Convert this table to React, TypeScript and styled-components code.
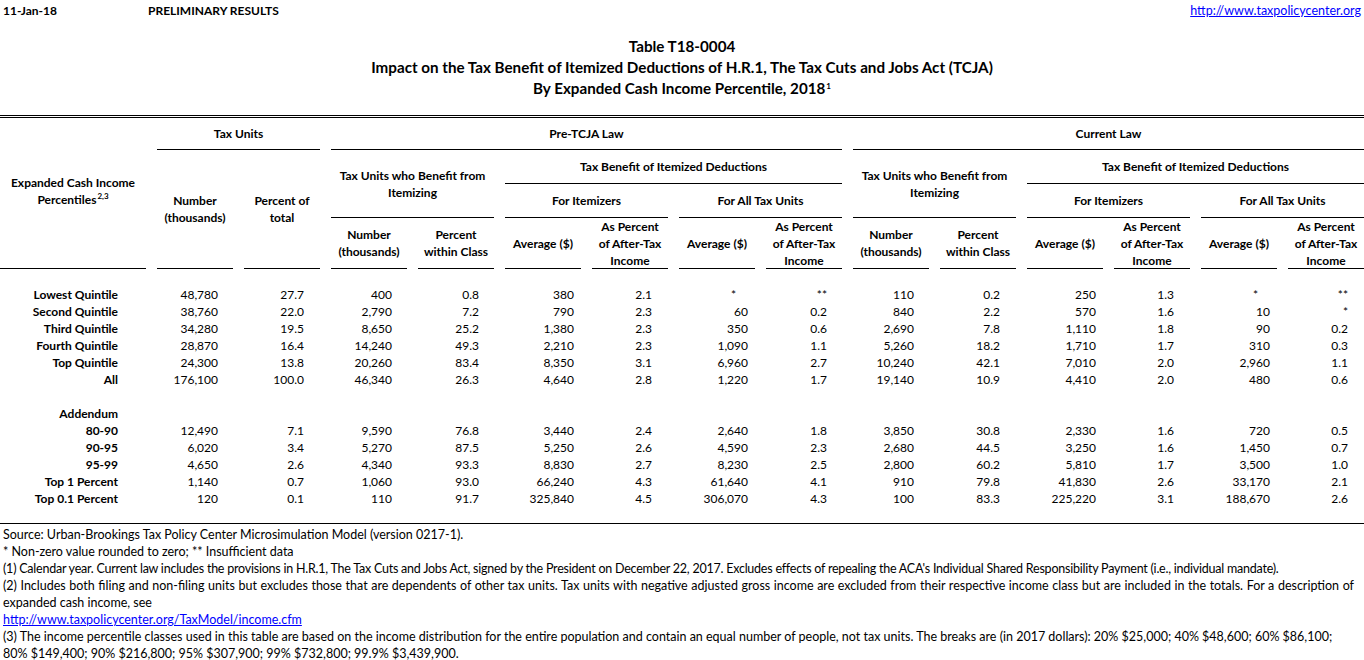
import React from "react";
import styled, { createGlobalStyle } from "styled-components";

const GlobalStyle = createGlobalStyle`
  html, body {
    margin: 0;
    padding: 0;
    background: #fff;
  }
  body {
    font-family: Lato, "Liberation Sans", sans-serif;
    color: #000;
  }
`;

// first column holds the row labels, then 14 data columns
const COLS = "146px repeat(14, 76px)";

const Sheet = styled.div`
  width: 1364px;
`;

const TopBar = styled.div`
  display: grid;
  grid-template-columns: 145px 1fr auto;
  align-items: center;
  height: 20px;
  padding: 0 3px;
  font-size: 12px;
`;

const Stamp = styled.span`
  font-weight: 700;
`;

const Link = styled.a<{ $size?: number }>`
  color: #0000ff;
  text-decoration: underline;
  font-size: ${(p) => (p.$size ? `${p.$size}px` : "inherit")};
`;

const TitleBlock = styled.div`
  margin-top: 16px;
  text-align: center;
  font-weight: 700;
  font-size: 15.2px;
  line-height: 21px;
`;

const Sup = styled.sup`
  font-size: 8px;
  line-height: 0;
  vertical-align: 5px;
  margin-left: 1px;
`;

const Header = styled.div`
  margin-top: 16px;
  border-top: 3px double #000;
  display: grid;
  grid-template-columns: ${COLS};
  grid-template-rows: 32px 34px 34px 51px;
  column-gap: 11px;
`;

const HeadCell = styled.div<{ $col: string; $row: string; $pad?: number }>`
  grid-column: ${(p) => p.$col};
  grid-row: ${(p) => p.$row};
  box-sizing: border-box;
  display: flex;
  align-items: center;
  justify-content: center;
  text-align: center;
  font-weight: 700;
  font-size: 12px;
  line-height: 17px;
  border-bottom: 1px solid #000;
  padding-bottom: ${(p) => p.$pad ?? 0}px;
`;

const Body = styled.div`
  padding: 17px 0 16px;
  border-bottom: 1px solid #000;
`;

const Row = styled.div`
  display: grid;
  grid-template-columns: ${COLS};
  column-gap: 11px;
  height: 17px;
  line-height: 17px;
  font-size: 12px;
  white-space: nowrap;
`;

const Label = styled.div`
  text-align: right;
  padding-right: 28px;
  font-weight: 700;
`;

const Num = styled.div<{ $pad: number }>`
  text-align: right;
  padding-right: ${(p) => p.$pad}px;
`;

const Notes = styled.div`
  padding: 2px 10px 0 3px;
  font-size: 12.5px;
  line-height: 17px;
  white-space: nowrap;
`;

const NoteLine = styled.div<{ $justify?: boolean; $tight?: boolean }>`
  text-align: ${(p) => (p.$justify ? "justify" : "left")};
  text-align-last: ${(p) => (p.$justify ? "justify" : "auto")};
  letter-spacing: ${(p) => (p.$tight ? "-0.23px" : "normal")};
`;

const PAD = [15, 16, 15, 15, 7, 16, 7, 15, 15, 16, 7, 16, 7, 16];
const AVG = [4, 6, 10, 12];

const rows: [string, string[]][] = [
  ["Lowest Quintile", ["48,780", "27.7", "400", "0.8", "380", "2.1", "*", "**", "110", "0.2", "250", "1.3", "*", "**"]],
  ["Second Quintile", ["38,760", "22.0", "2,790", "7.2", "790", "2.3", "60", "0.2", "840", "2.2", "570", "1.6", "10", "*"]],
  ["Third Quintile", ["34,280", "19.5", "8,650", "25.2", "1,380", "2.3", "350", "0.6", "2,690", "7.8", "1,110", "1.8", "90", "0.2"]],
  ["Fourth Quintile", ["28,870", "16.4", "14,240", "49.3", "2,210", "2.3", "1,090", "1.1", "5,260", "18.2", "1,710", "1.7", "310", "0.3"]],
  ["Top Quintile", ["24,300", "13.8", "20,260", "83.4", "8,350", "3.1", "6,960", "2.7", "10,240", "42.1", "7,010", "2.0", "2,960", "1.1"]],
  ["All", ["176,100", "100.0", "46,340", "26.3", "4,640", "2.8", "1,220", "1.7", "19,140", "10.9", "4,410", "2.0", "480", "0.6"]],
  ["", []],
  ["Addendum", []],
  ["80-90", ["12,490", "7.1", "9,590", "76.8", "3,440", "2.4", "2,640", "1.8", "3,850", "30.8", "2,330", "1.6", "720", "0.5"]],
  ["90-95", ["6,020", "3.4", "5,270", "87.5", "5,250", "2.6", "4,590", "2.3", "2,680", "44.5", "3,250", "1.6", "1,450", "0.7"]],
  ["95-99", ["4,650", "2.6", "4,340", "93.3", "8,830", "2.7", "8,230", "2.5", "2,800", "60.2", "5,810", "1.7", "3,500", "1.0"]],
  ["Top 1 Percent", ["1,140", "0.7", "1,060", "93.0", "66,240", "4.3", "61,640", "4.1", "910", "79.8", "41,830", "2.6", "33,170", "2.1"]],
  ["Top 0.1 Percent", ["120", "0.1", "110", "91.7", "325,840", "4.5", "306,070", "4.3", "100", "83.3", "225,220", "3.1", "188,670", "2.6"]],
];

const padFor = (i: number, v: string) =>
  v === "*" && AVG.includes(i) ? 19 : PAD[i];

const LawBlock = ({ start, title }: { start: number; title: string }) => (
  <>
    <HeadCell $col={`${start} / ${start + 6}`} $row="1">{title}</HeadCell>
    <HeadCell $col={`${start} / ${start + 2}`} $row="2 / 4">
      Tax Units who Benefit from
      <br />
      Itemizing
    </HeadCell>
    <HeadCell $col={`${start + 2} / ${start + 6}`} $row="2">
      Tax Benefit of Itemized Deductions
    </HeadCell>
    <HeadCell $col={`${start + 2} / ${start + 4}`} $row="3">For Itemizers</HeadCell>
    <HeadCell $col={`${start + 4} / ${start + 6}`} $row="3">For All Tax Units</HeadCell>
    <HeadCell $col={`${start}`} $row="4">
      Number
      <br />
      (thousands)
    </HeadCell>
    <HeadCell $col={`${start + 1}`} $row="4">
      Percent
      <br />
      within Class
    </HeadCell>
    <HeadCell $col={`${start + 2}`} $row="4">Average ($)</HeadCell>
    <HeadCell $col={`${start + 3}`} $row="4">
      As Percent
      <br />
      of After-Tax
      <br />
      Income
    </HeadCell>
    <HeadCell $col={`${start + 4}`} $row="4">Average ($)</HeadCell>
    <HeadCell $col={`${start + 5}`} $row="4">
      As Percent
      <br />
      of After-Tax
      <br />
      Income
    </HeadCell>
  </>
);

export default function App() {
  return (
    <Sheet>
      <GlobalStyle />
      <TopBar>
        <Stamp>11-Jan-18</Stamp>
        <Stamp>PRELIMINARY RESULTS</Stamp>
        <Link href="#" $size={12.5}>
          http://www.taxpolicycenter.org
        </Link>
      </TopBar>

      <TitleBlock>
        <div>Table T18-0004</div>
        <div>
          Impact on the Tax Benefit of Itemized Deductions of H.R.1, The Tax Cuts and Jobs Act (TCJA)
        </div>
        <div>
          By Expanded Cash Income Percentile, 2018<Sup>1</Sup>
        </div>
      </TitleBlock>

      <Header>
        <HeadCell $col="1" $row="1 / 5" $pad={4}>
          <span>
            Expanded Cash Income
            <br />
            Percentiles<Sup>2,3</Sup>
          </span>
        </HeadCell>
        <HeadCell $col="2 / 4" $row="1">Tax Units</HeadCell>
        <HeadCell $col="2" $row="2 / 5">
          Number
          <br />
          (thousands)
        </HeadCell>
        <HeadCell $col="3" $row="2 / 5">
          Percent of
          <br />
          total
        </HeadCell>
        <LawBlock start={4} title="Pre-TCJA Law" />
        <LawBlock start={10} title="Current Law" />
      </Header>

      <Body>
        {rows.map(([label, vals], r) => (
          <Row key={r}>
            <Label>{label}</Label>
            {vals.map((v, i) => (
              <Num key={i} $pad={padFor(i, v)}>
                {v}
              </Num>
            ))}
          </Row>
        ))}
      </Body>

      <Notes>
        <NoteLine>Source: Urban-Brookings Tax Policy Center Microsimulation Model (version 0217-1).</NoteLine>
        <NoteLine>* Non-zero value rounded to zero; ** Insufficient data</NoteLine>
        <NoteLine $tight>
          (1) Calendar year. Current law includes the provisions in H.R.1, The Tax Cuts and Jobs Act, signed by the
          President on December 22, 2017. Excludes effects of repealing the ACA's Individual Shared Responsibility
          Payment (i.e., individual mandate).
        </NoteLine>
        <NoteLine $justify>
          (2) Includes both filing and non-filing units but excludes those that are dependents of other tax units. Tax
          units with negative adjusted gross income are excluded from their respective income class but are included in
          the totals. For a description of
        </NoteLine>
        <NoteLine>expanded cash income, see</NoteLine>
        <NoteLine>
          <Link href="#">http://www.taxpolicycenter.org/TaxModel/income.cfm</Link>
        </NoteLine>
        <NoteLine>
          (3) The income percentile classes used in this table are based on the income distribution for the entire
          population and contain an equal number of people, not tax units. The breaks are (in 2017 dollars): 20%
          $25,000; 40% $48,600; 60% $86,100;
        </NoteLine>
        <NoteLine>80% $149,400; 90% $216,800; 95% $307,900; 99% $732,800; 99.9% $3,439,900.</NoteLine>
      </Notes>
    </Sheet>
  );
}
